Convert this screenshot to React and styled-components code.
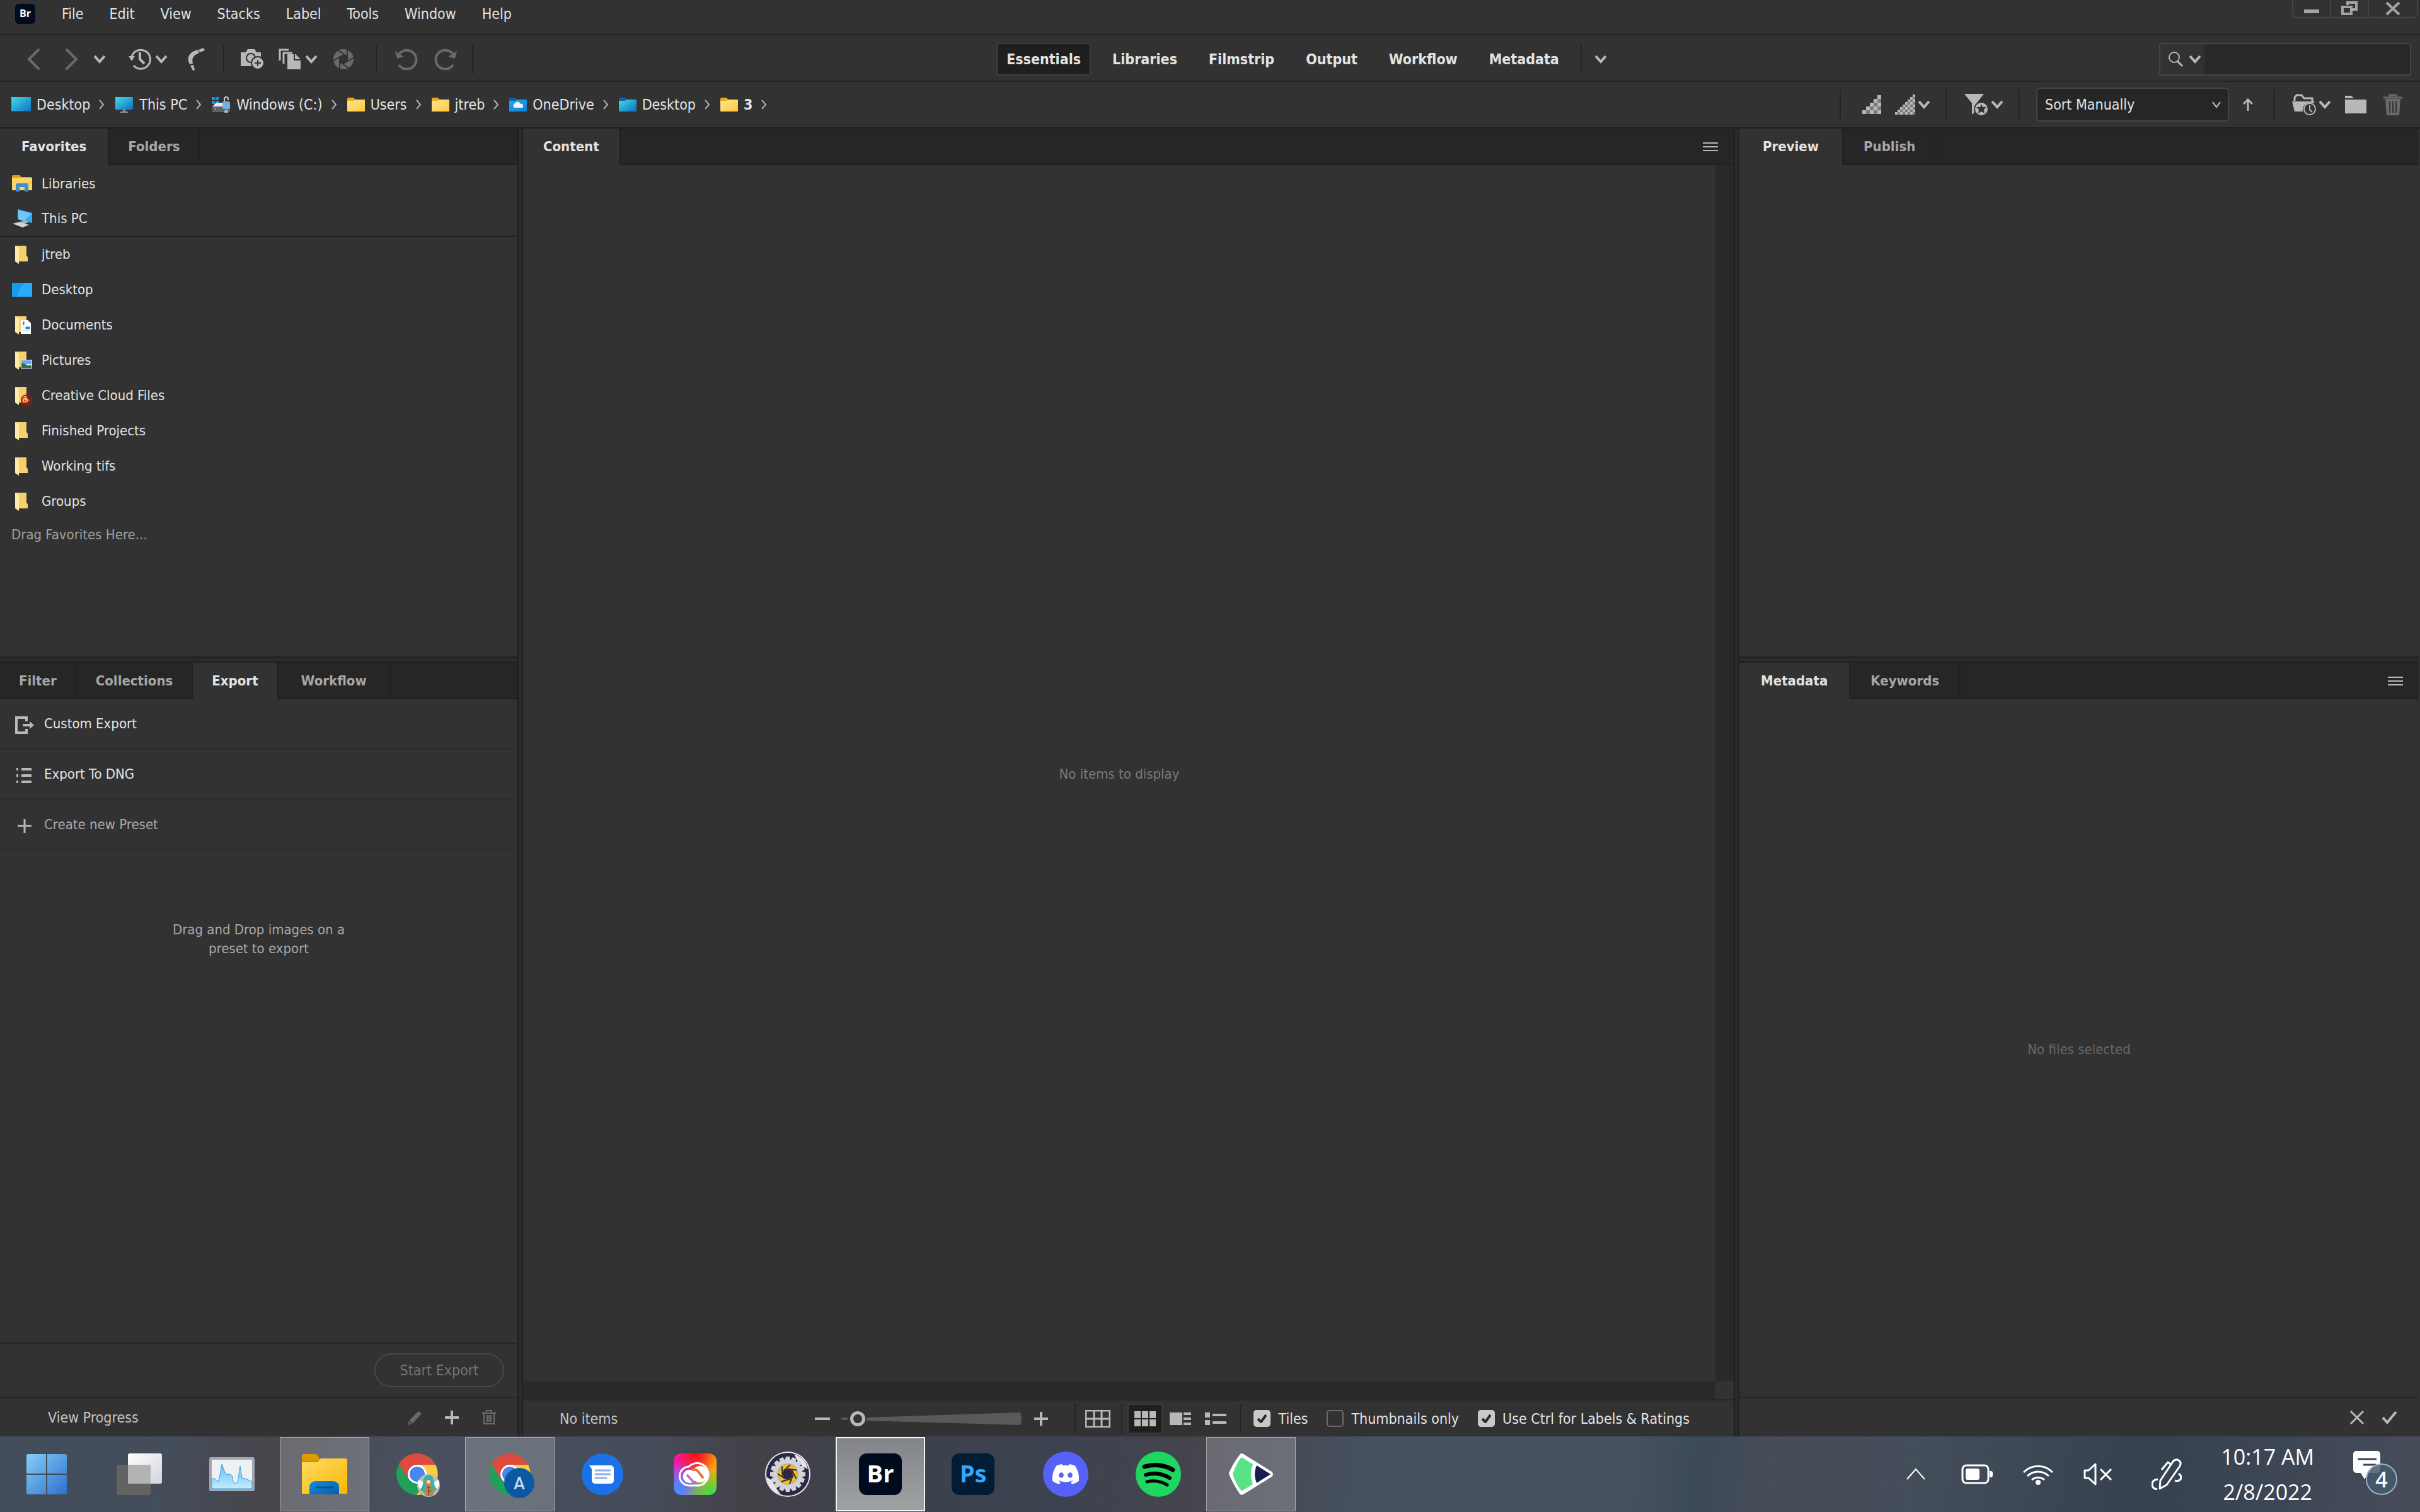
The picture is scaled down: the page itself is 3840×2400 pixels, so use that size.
import { useState } from "react";
import styled, { createGlobalStyle, css } from "styled-components";
import { FaDiscord } from "react-icons/fa";

const GlobalStyle = createGlobalStyle`
  *, *::before, *::after {
    box-sizing: border-box;
  }
  body {
    margin: 0;
    background: #323232;
    color: #e3e3e3;
    font-family: "DejaVu Sans Condensed", "DejaVu Sans", sans-serif;
    font-size: 23px;
    line-height: 30px;
  }
  button, input, select {
    font: inherit;
    color: inherit;
  }
  ul {
    list-style: none;
    margin: 0;
    padding: 0;
  }
`;

const Page = styled.div`
  display: flex;
  flex-direction: column;
  min-height: 100vh;
`;

const Bar = styled.div`
  display: flex;
  align-items: center;
  border-bottom: 2px solid #252525;
`;

const MenuBar = styled(Bar)`
  height: 56px;
  align-items: flex-start;
  padding-left: 24px;
`;

const Menus = styled.nav`
  display: flex;
  gap: 41px;
  padding: 7px 0 0 42px;
`;

const PlainButton = styled.button`
  display: inline-flex;
  align-items: center;
  background: none;
  border: none;
  padding: 0;
  cursor: pointer;
`;

const AppBadge = styled.div`
  width: 32px;
  height: 32px;
  margin-top: 6px;
  border-radius: 6px;
  background: #000b1d;
  color: #fff;
  font-family: "Open Sans", sans-serif;
  font-size: 16px;
  font-weight: 700;
  line-height: 30px;
  text-align: center;
`;

const WindowControls = styled.div`
  display: flex;
  margin: 0 3px 0 auto;
  height: 29px;
  border: 2px solid #454545;
  border-top: none;
  border-radius: 0 0 8px 8px;
`;

const WindowButton = styled(PlainButton)`
  width: ${(p) => p.$width || 60}px;
  justify-content: center;
  color: #a3a3a3;
  & + & {
    border-left: 2px solid #454545;
  }
`;

const Toolbar = styled(Bar)`
  height: 74px;
  padding-top: 4px;
`;

const ToolGroup = styled.div`
  display: flex;
  align-items: center;
  height: 48px;
  padding: 0 ${(p) => p.$right || 0}px 0 ${(p) => p.$left || 0}px;
  border-right: ${(p) => (p.$last ? "none" : "2px solid #252525")};
`;

const Tool = styled(PlainButton)`
  margin-left: ${(p) => p.$gap || 0}px;
  color: ${(p) => (p.$dim ? "#6a6a6a" : "#b8b8b8")};
`;

const Workspaces = styled.div`
  display: flex;
  align-items: center;
  margin: 0 auto;
  padding-right: 46px;
`;

const WorkspaceButton = styled(PlainButton)`
  height: 52px;
  padding: 0 14px;
  margin-right: 18px;
  border: 2px solid transparent;
  border-radius: 4px;
  font-weight: 700;
  ${(p) =>
    p.$active &&
    css`
      background: #1f1f1f;
      border-color: #3d3d3d;
    `}
`;

const SearchBox = styled.label`
  display: flex;
  width: 400px;
  height: 52px;
  margin-right: 14px;
  border: 2px solid #464646;
  border-radius: 4px;
`;

const SearchIcons = styled.span`
  display: flex;
  align-items: center;
  gap: 8px;
  width: 70px;
  padding-left: 12px;
  color: #b8b8b8;
`;

const SearchInput = styled.input`
  flex: 1;
  min-width: 0;
  border: none;
  background: #292929;
  outline: none;
`;

const PathBar = styled(Bar)`
  height: 74px;
  border-color: #1f1f1f;
  padding-left: 18px;
`;

const Crumbs = styled.ul`
  display: flex;
  flex: 1;
`;

const Crumb = styled.li`
  display: flex;
  align-items: center;
  gap: 14px;
  margin-right: 16px;
`;

const CrumbLink = styled.a`
  display: flex;
  align-items: center;
  gap: 9px;
  color: inherit;
  text-decoration: none;
  font-weight: ${(p) => (p.$current ? 700 : 400)};
`;

const SelectWrap = styled.div`
  position: relative;
  width: 306px;
  margin-left: 26px;
  svg {
    position: absolute;
    right: 12px;
    top: 21px;
    pointer-events: none;
  }
`;

const SortSelect = styled.select`
  appearance: none;
  width: 100%;
  height: 54px;
  padding: 0 40px 0 12px;
  background: #262626;
  border: 2px solid #444;
  border-radius: 6px;
`;

const Workspace = styled.main`
  flex: 1;
  display: grid;
  grid-template-columns: 821px 9px minmax(0, 1fr) 9px 1078px;
  padding-right: 2px;
`;

const Column = styled.div`
  display: flex;
  flex-direction: column;
  min-width: 0;
`;

const ColumnSplitter = styled.div`
  background: #2b2b2b;
  border: solid #1f1f1f;
  border-width: 0 2px;
`;

const RowSplitter = styled.div`
  height: 10px;
  background: #2b2b2b;
  border: solid #1f1f1f;
  border-width: 2px 0;
`;

const Panel = styled.section`
  display: flex;
  flex-direction: column;
  flex: ${(p) => (p.$upper ? "0 0 838px" : "1")};
  min-height: 0;
  font-size: 22px;
`;

const Tabs = styled.div`
  display: flex;
  height: 58px;
  background: #262626;
`;

const Tab = styled(PlainButton)`
  padding: 2px ${(p) => p.$pad || 33}px 0;
  border: solid #202020;
  border-width: 0 2px 2px 0;
  font-weight: 700;
  color: ${(p) => (p.$active ? "#e3e3e3" : "#a6a6a6")};
  ${(p) =>
    p.$active &&
    css`
      background: #323232;
      border-bottom-color: #323232;
    `}
`;

const TabsRest = styled.div`
  display: flex;
  align-items: center;
  justify-content: flex-end;
  flex: 1;
  padding: 2px 25px 0 0;
  border-bottom: 2px solid #202020;
  color: #b8b8b8;
`;

const Favorites = styled.ul`
  padding-top: 2px;
`;

const FavoriteRow = styled.li`
  display: flex;
  align-items: center;
  gap: 14px;
  height: 56px;
  padding-left: 18px;
  border-bottom: ${(p) => (p.$divided ? "2px solid #1f1f1f" : "none")};
`;

const Hint = styled.p`
  margin: 0;
  padding: 10px 18px;
  color: #a0a0a0;
`;

const PresetRow = styled.li`
  height: 80px;
  padding-left: 24px;
  display: flex;
  align-items: center;
  border-bottom: 2px solid #2c2c2c;
  color: ${(p) => (p.$muted ? "#a8a8a8" : "#e3e3e3")};
  svg {
    margin: 4px 16px 0 0;
    color: #b8b8b8;
  }
`;

const DropHint = styled.p`
  margin: 111px auto 0;
  width: 300px;
  text-align: center;
  color: #a8a8a8;
`;

const ExportFooter = styled.div`
  display: flex;
  justify-content: flex-end;
  margin-top: auto;
  padding: 15px 21px;
  height: 86px;
  border-top: 2px solid #252525;
`;

const StartExport = styled.button`
  height: 54px;
  width: 206px;
  background: none;
  border: 2px solid #484848;
  border-radius: 27px;
  font-size: 23px;
  color: #727272;
`;

const StatusBar = styled.div`
  display: flex;
  align-items: center;
  height: ${(p) => p.$height || 63}px;
  border-top: 2px solid #252525;
  padding: 0 ${(p) => p.$right || 34}px 0 ${(p) => p.$left || 0}px;
  font-size: 23px;
`;

const Muted = styled.span`
  margin-right: auto;
  color: #c4c4c4;
`;

const ContentArea = styled.div`
  flex: 1;
  display: grid;
  grid-template: minmax(0, 1fr) 29px / minmax(0, 1fr) 29px;
`;

const Empty = styled.div`
  flex: 1;
  display: flex;
  align-items: center;
  justify-content: center;
  padding-top: 4px;
  color: ${(p) => p.$color || "#7a7a7a"};
`;

const ScrollTrack = styled.div`
  background: #292929;
`;

const SliderWrap = styled.div`
  position: relative;
  width: 287px;
  height: 26px;
  margin: 0 18px;
  svg {
    position: absolute;
    inset: 0;
  }
`;

const Slider = styled.input`
  position: relative;
  appearance: none;
  display: block;
  width: 100%;
  height: 26px;
  margin: 0;
  background: none;
  &::-webkit-slider-thumb {
    appearance: none;
    width: 24px;
    height: 24px;
    border: 5px solid #b8b8b8;
    border-radius: 50%;
    background: #323232;
  }
`;

const ViewButton = styled(PlainButton)`
  justify-content: center;
  width: 56px;
  height: 48px;
  color: #b8b8b8;
  border-radius: 4px;
  ${(p) =>
    p.$active &&
    css`
      background: #1f1f1f;
      border: 2px solid #3b3b3b;
    `}
`;

const Check = styled.label`
  display: flex;
  align-items: center;
  gap: 12px;
  margin-left: ${(p) => p.$gap || 30}px;
`;

const CheckMark = styled.span`
  position: relative;
  width: 27px;
  height: 27px;
  svg {
    position: absolute;
    left: 5px;
    top: 6px;
    pointer-events: none;
  }
`;

const CheckInput = styled.input`
  appearance: none;
  display: block;
  width: 27px;
  height: 27px;
  margin: 0;
  border: 2px solid #6c6c6c;
  border-radius: 5px;
  &:checked {
    background: #c9c9c9;
    border-color: #c9c9c9;
  }
`;

const Taskbar = styled.footer`
  display: flex;
  justify-content: space-between;
  height: 120px;
  padding-left: 3px;
  background: linear-gradient(
    97deg,
    #424d5b 0%,
    #444d5a 7%,
    #47454b 11%,
    #49515e 17%,
    #454c59 27%,
    #434148 31%,
    #3b414d 38%,
    #3c4350 44%,
    #45444c 49%,
    #465260 57%,
    #465260 67%,
    #3c4957 70%,
    #464c58 73%,
    #444d5a 79%,
    #364250 88%,
    #3b4553 93%,
    #474c59 100%
  );
`;

const Tasks = styled.div`
  display: flex;
  gap: 5px;
  padding: 1px 0;
`;

const Task = styled(PlainButton)`
  justify-content: center;
  width: 142px;
  height: 118px;
  border: 1px solid transparent;
  ${(p) =>
    p.$open &&
    css`
      background: rgba(255, 255, 255, 0.2);
      border-color: rgba(255, 255, 255, 0.4);
    `}
  ${(p) =>
    p.$focused &&
    css`
      background: linear-gradient(#83848a, #a0a1a4);
      border: 2px solid #f4f4f4;
    `}
`;

const AdobeTile = styled.span`
  width: 68px;
  height: 66px;
  border-radius: 12px;
  background: ${(p) => p.$bg};
  color: ${(p) => p.$color};
  font-family: "Open Sans", sans-serif;
  font-size: 38px;
  font-weight: 700;
  line-height: 62px;
  text-align: center;
`;

const DiscordDisc = styled.span`
  display: flex;
  align-items: center;
  justify-content: center;
  width: 72px;
  height: 72px;
  border-radius: 50%;
  background: #5562f5;
  color: #fff;
`;

const Tray = styled.div`
  display: flex;
  align-items: center;
  gap: 62px;
  padding-right: 34px;
  color: #fff;
`;

const TrayStatus = styled.div`
  display: flex;
  align-items: center;
  gap: 48px;
`;

const Clock = styled.div`
  font-family: "Open Sans", sans-serif;
  font-size: 34px;
  line-height: 56px;
  text-align: center;
`;

const Notifications = styled(PlainButton)`
  position: relative;
  width: 72px;
  height: 74px;
  align-items: flex-start;
  color: #fff;
`;

const NotificationCount = styled.span`
  position: absolute;
  left: 20px;
  top: 20px;
  width: 50px;
  height: 50px;
  border: 2px solid #a3b1bd;
  border-radius: 50%;
  background: rgba(67, 91, 110, 0.85);
  font-family: "Open Sans", sans-serif;
  font-size: 34px;
  font-weight: 600;
  line-height: 46px;
  text-align: center;
`;

const Svg = ({ w, h, children, ...rest }) => (
  <svg
    width={w}
    height={h}
    viewBox={`0 0 ${w} ${h}`}
    fill="none"
    aria-hidden="true"
    {...rest}
  >
    {children}
  </svg>
);

const Caret = ({ size = 20 }) => (
  <Svg w={size} h={14} viewBox="0 0 20 14">
    <path d="M2 2l8 9 8-9" stroke="currentColor" strokeWidth="4" />
  </Svg>
);

const BackIcon = () => (
  <Svg w={21} h={34}>
    <path d="M18 2L3 17l15 15" stroke="currentColor" strokeWidth="4" strokeLinecap="round" />
  </Svg>
);

const ForwardIcon = () => (
  <Svg w={21} h={34}>
    <path d="M3 2l15 15L3 32" stroke="currentColor" strokeWidth="4" strokeLinecap="round" />
  </Svg>
);

const HistoryIcon = () => (
  <Svg w={36} h={34}>
    <path d="M5 13A15 15 0 1 1 8 27" stroke="currentColor" strokeWidth="3" />
    <path d="M0 12h10l-5 8z" fill="currentColor" />
    <path d="M18 6v11l7 7" stroke="currentColor" strokeWidth="4" />
  </Svg>
);

const BoomerangIcon = () => (
  <Svg w={28} h={36}>
    <path
      d="M26 0l2 4-8 3-2-4zM17 3l2 5C9 12 7 17 9 25l-5 1C-2 15 4 6 17 3zM5 28l5-1 2 8-3 1z"
      fill="currentColor"
    />
  </Svg>
);

const CameraIcon = () => (
  <Svg w={38} h={34}>
    <path d="M0 6h8l3-5h11l3 5h7v7a11 11 0 0 0-12 15H0z" fill="currentColor" />
    <circle cx="16" cy="15" r="7" stroke="#323232" strokeWidth="2" />
    <circle cx="27" cy="23" r="11" fill="#323232" />
    <circle cx="27" cy="23" r="9" fill="currentColor" />
    <path d="M27 18v10M22 23h10" stroke="#323232" strokeWidth="2" />
  </Svg>
);

const PagesIcon = () => (
  <Svg w={36} h={34}>
    <path d="M2 19V2h14M8 24V7h14" stroke="currentColor" strokeWidth="3" />
    <path d="M14 9h10v10h11v14H14z" fill="currentColor" />
    <path d="M26 8l9 9h-9z" fill="currentColor" />
  </Svg>
);

const ApertureIcon = () => (
  <Svg w={34} h={34}>
    <circle cx="17" cy="17" r="16" fill="currentColor" />
    <path d="M17 10l6 3v8l-6 3-6-3v-8z" fill="#323232" />
    <path
      d="M23 13L9 3M23 21V1M17 24l17-10M11 21l14 10M11 13v20M17 10L0 20"
      stroke="#323232"
      strokeWidth="2"
    />
    <path d="M17 11l5 3v6l-5 3-5-3v-6z" fill="#323232" />
  </Svg>
);

const UndoIcon = ({ flip }) => (
  <Svg w={36} h={34}>
    <g transform={flip ? "matrix(-1 0 0 1 36 0)" : undefined}>
      <path d="M7 8a15 15 0 1 1-1 18" stroke="currentColor" strokeWidth="4" />
      <path d="M0 4l3 12 11-3z" fill="currentColor" />
    </g>
  </Svg>
);

const SearchIcon = () => (
  <Svg w={25} h={25}>
    <circle cx="10" cy="9" r="8" stroke="currentColor" strokeWidth="2" />
    <path d="M15 15l8 8" stroke="currentColor" strokeWidth="3" />
  </Svg>
);

const ThinChevron = () => (
  <Svg w={9} h={16}>
    <path d="M1 1l6 7-6 7" stroke="#b0b0b0" strokeWidth="2" />
  </Svg>
);

const Stairs = ({ size, step }) => {
  const cells = [];
  const n = Math.floor(size / step);
  for (let col = 0; col < n; col++) {
    for (let row = n - 1 - col; row < n; row++) {
      cells.push(
        <rect
          key={`${col}-${row}`}
          x={col * step}
          y={row * step}
          width={step}
          height={step}
          fill="currentColor"
          opacity={(col + row + n) % 2 ? 1 : 0.55}
        />,
      );
    }
  }
  return (
    <Svg w={size} h={size}>
      {cells}
    </Svg>
  );
};

const FilterIcon = () => (
  <Svg w={38} h={36}>
    <path d="M0 1h31L20 15a13 13 0 0 0-4 15l-4 4V16z" fill="currentColor" />
    <circle cx="27" cy="25" r="10" fill="currentColor" />
    <path d="M27 17l2 5h6l-4 4 1 6-5-3-5 3 1-6-4-4h6z" fill="#323232" />
  </Svg>
);

const ArrowUp = () => (
  <Svg w={16} h={20}>
    <path d="M8 20V3M1 9l7-7 7 7" stroke="currentColor" strokeWidth="3" />
  </Svg>
);

const RecentFolderIcon = () => (
  <Svg w={38} h={34}>
    <path d="M4 11V6l3-4h8l4 5h13v5" stroke="currentColor" strokeWidth="3" />
    <path d="M0 12h36l-2 3a12 12 0 0 0-17 13H4z" fill="currentColor" />
    <circle cx="28" cy="24" r="9" fill="#323232" stroke="currentColor" strokeWidth="2" />
    <path d="M28 18v7l4 4" stroke="currentColor" strokeWidth="2" />
  </Svg>
);

const NewFolderIcon = () => (
  <Svg w={34} h={30}>
    <path d="M0 1h10l4 4H0zM0 7h34v22H0z" fill="currentColor" />
  </Svg>
);

const TrashIcon = () => (
  <Svg w={30} h={34}>
    <path d="M0 6h30M10 5V2h10v3" stroke="currentColor" strokeWidth="3" />
    <path d="M3 8h24l-2 26H5z" fill="currentColor" />
    <path d="M10 12v18M15 12v18M20 12v18" stroke="#323232" strokeWidth="2" />
  </Svg>
);

const TrashOutlineIcon = () => (
  <Svg w={22} h={24}>
    <path d="M0 5h22M7 4V1h8v3M3 5v17h16V5M8 8v11M11 8v11M14 8v11" stroke="currentColor" strokeWidth="2" />
  </Svg>
);

const BurgerIcon = () => (
  <Svg w={24} h={16}>
    <path d="M0 2h24M0 8h24M0 14h24" stroke="currentColor" strokeWidth="2" />
  </Svg>
);

const DesktopIcon = () => (
  <Svg w={31} h={24}>
    <rect width="31" height="24" fill="url(#teal)" />
    <path d="M0 23h31" stroke="#0a4f96" strokeWidth="2" />
  </Svg>
);

const MonitorIcon = () => (
  <Svg w={30} h={26}>
    <rect x="1" y="1" width="28" height="20" rx="1" fill="url(#teal)" />
    <path d="M13 21h4v3h4v2H9v-2h4z" fill="#8d9299" />
  </Svg>
);

const DriveIcon = () => (
  <Svg w={30} h={26}>
    <path d="M0 1h5v5H0zM6 1h5v5H6zM0 7h5v5H0zM6 7h5v5H6z" fill="#1c8fdc" />
    <path d="M3 14l4-4h16l6 6H1z" fill="#e8eaec" />
    <path d="M1 16h28v9H1z" fill="#5d6166" />
    <rect x="5" y="19" width="2" height="2" fill="#4be34b" />
    <path d="M20 8V4a3 3 0 0 1 6 0v2" stroke="#c7ccd1" strokeWidth="2" />
    <rect x="17" y="8" width="12" height="12" rx="2" fill="#6fb1e2" />
    <circle cx="23" cy="24" r="3" fill="#a9b4bd" />
  </Svg>
);

const FolderIcon = ({ kind }) => (
  <Svg w={28} h={22}>
    <path d="M0 2a2 2 0 0 1 2-2h8l3 4h15v6H0z" fill={kind ? "#0a62b5" : "#efab17"} />
    <path d="M0 5h10l2-2h16v18a1 1 0 0 1-1 1H1a1 1 0 0 1-1-1z" fill={`url(#${kind || "folder"})`} />
    {kind === "sky" && (
      <path d="M8 16a4 4 0 0 1 1-7 5 5 0 0 1 9 1 3 3 0 0 1 2 6z" fill="#fff" opacity="0.9" />
    )}
  </Svg>
);

const LibrariesIcon = () => (
  <Svg w={34} h={28}>
    <path d="M1 2a2 2 0 0 1 2-2h10l3 3h16v20H1z" fill="#dd9c0c" />
    <rect x="1" y="4" width="32" height="20" rx="1" fill="#fdd566" />
    <path d="M7 26V15a2 2 0 0 1 2-2h16a2 2 0 0 1 2 2v11h-6v-7h-8v7z" fill="#3d8fd1" />
  </Svg>
);

const OldPcIcon = () => (
  <Svg w={34} h={32}>
    <path d="M10 1l23 6v16L10 17z" fill="#37abef" />
    <path d="M11 2l21 6L20 20l-9-3z" fill="#6cc8f8" />
    <path d="M2 24l12-3 14 5-10 4z" fill="#cfd4d8" />
    <path d="M14 21l8-2 6 2-6 3z" fill="#aab1b8" />
  </Svg>
);

const SlimFolder = ({ children }) => (
  <Svg w={34} h={30}>
    <path d="M6 1h18v16l2 2v7H10z" fill="#f4d06f" />
    <path d="M6 1l6 3v26l-6-4z" fill="#ffe9a6" />
    {children}
  </Svg>
);

const BlueDesktop = () => (
  <Svg w={34} h={24}>
    <rect x="1" y="1" width="32" height="22" fill="#169bf3" />
    <path d="M22 1h11v22H10q1-15 12-22z" fill="#2ba9fb" />
  </Svg>
);

const DocumentsIcon = () => (
  <SlimFolder>
    <path d="M15 7h11l5 5v17H15z" fill="#fff" />
    <path d="M18 14l2-5v6M23 18h6v3h-6z" stroke="#2585c9" fill="#2585c9" />
    <path d="M18 24h10M18 18h3" stroke="#b8c5d0" />
  </SlimFolder>
);

const PicturesIcon = () => (
  <SlimFolder>
    <rect x="15" y="14" width="18" height="14" fill="#dceaf8" />
    <path d="M16 15h16v6H16z" fill="#6ba7e8" />
    <path d="M16 19q6 1 9 4h7v4H16z" fill="#2f6d50" />
  </SlimFolder>
);

const CloudFilesIcon = () => (
  <SlimFolder>
    <circle cx="24" cy="22" r="8" stroke="#b3160c" strokeWidth="2" />
    <path d="M19 25a4 4 0 0 1 6-6l4 5M21 25v-3l5 4" stroke="#ff4a22" strokeWidth="2" />
  </SlimFolder>
);

const CustomExportIcon = () => (
  <Svg w={30} h={28}>
    <path d="M18 8V2H2v24h16v-6" stroke="currentColor" strokeWidth="4" />
    <path d="M12 12h11V8l7 6-7 6v-4H12z" fill="currentColor" />
  </Svg>
);

const ListIcon = () => (
  <Svg w={30} h={24}>
    <path d="M2 2h3M10 2h16M2 12h3M10 12h16M2 22h3M10 22h16" stroke="currentColor" strokeWidth="4" />
  </Svg>
);

const PlusIcon = ({ w = 24, thickness = 4 }) => (
  <Svg w={w} h={24}>
    <path
      d={`M${w / 2} 1v22M${w / 2 - 11} 12h22`}
      stroke="currentColor"
      strokeWidth={thickness}
    />
  </Svg>
);

const PencilIcon = () => (
  <Svg w={24} h={24}>
    <path d="M17 2l5 4L8 21l-8 3 3-8z" fill="currentColor" />
    <path d="M4 18l3 2-4 2z" fill="#323232" />
  </Svg>
);

const WindowsLogo = () => (
  <Svg w={64} h={64}>
    <path
      d="M3 0h28v31H0V3a3 3 0 0 1 3-3zM33 0h28a3 3 0 0 1 3 3v28H33zM0 33h31v31H3a3 3 0 0 1-3-3zM33 33h31v28a3 3 0 0 1-3 3H33z"
      fill="url(#win)"
    />
  </Svg>
);

const TaskViewIcon = () => (
  <Svg w={72} h={66}>
    <rect y="18" width="54" height="48" rx="3" fill="#636363" />
    <rect x="18" width="54" height="48" rx="3" fill="url(#paper)" />
    <path d="M18 18h36v30H21a3 3 0 0 1-3-3z" fill="#b3b3b5" />
  </Svg>
);

const ChartIcon = () => (
  <Svg w={72} h={54}>
    <rect width="72" height="54" rx="3" fill="#a1a8b3" />
    <rect x="4" y="4" width="64" height="46" fill="#eef0f2" />
    <path
      d="M4 34h5l5 5 2-6 4-22 6 16h7l4 4 1 8 3 3 4-2 4-26 3 19 8 2 8 4v11H4z"
      fill="url(#chart)"
      stroke="#3fa0dc"
    />
  </Svg>
);

const ExplorerIcon = () => (
  <Svg w={72} h={64}>
    <path d="M0 3a3 3 0 0 1 3-3h18c3 0 5 2 6 6l3 5H0z" fill="#dd9b00" />
    <path d="M0 12h26l4-5h39a3 3 0 0 1 3 3v53H0z" fill="url(#explorer)" />
    <path d="M12 64V52a9 9 0 0 1 9-9h29a9 9 0 0 1 9 9v12z" fill="url(#explorerBlue)" />
    <path d="M23 53h26" stroke="#0b4e8f" strokeWidth="3" strokeLinecap="round" />
  </Svg>
);

const Chrome = ({ children }) => (
  <Svg w={66} h={74} overflow="visible">
    <circle cx="33" cy="37" r="33" fill="#21a05a" />
    <path d="M33 37l16 9-17 24a33 33 0 0 0 30-48H33z" fill="#fccb44" />
    <path d="M4 21a33 33 0 0 1 58 1H33L19 45z" fill="#dc4b3e" />
    <circle cx="33" cy="37" r="15" fill="#fff" />
    <circle cx="33" cy="37" r="12" fill="#4a86ef" />
    {children}
  </Svg>
);

const ChromeAvatar = () => (
  <Chrome>
    <circle cx="51" cy="55" r="18" fill="#bfbcae" />
    <path d="M34 47q8-2 10 10l-4 6q-7-6-6-16zM68 47q-8-2-10 10l4 6q7-6 6-16z" fill="#fff" />
    <path d="M51 38q-8 1-8 10-1 9-6 14 7 2 9 9l2-17h7l2 16q3-7 8-9-5-4-6-13 0-9-8-10z" fill="#35b2ab" />
    <path d="M47 47q4-4 8 0l1 7q5 10 1 18H46q-4-8 1-18z" fill="#b48a50" />
    <path d="M48 57q4 4 7 0M48 63q4 3 8 0M51 54v18" stroke="#5d3a22" />
    <circle cx="51" cy="49" r="3" fill="#f7d9b5" />
  </Chrome>
);

const ChromeLetter = () => (
  <Chrome>
    <circle cx="48" cy="51" r="24" fill="#0a59a2" />
    <text
      x="48"
      y="61"
      textAnchor="middle"
      fill="#c9dcef"
      fontFamily="Roboto, sans-serif"
      fontSize="27"
      fontWeight="500"
    >
      A
    </text>
  </Chrome>
);

const MessagesIcon = () => (
  <Svg w={66} h={66}>
    <circle cx="33" cy="33" r="33" fill="#1b72e8" />
    <path d="M12 19h34a5 5 0 0 1 5 5v19a5 5 0 0 1-5 5H21a5 5 0 0 1-5-5V25z" fill="#fff" />
    <path d="M22 27h23M22 33h23M22 39h17" stroke="#8ab0f2" strokeWidth="3" strokeLinecap="round" />
  </Svg>
);

const CreativeCloudShell = styled.span`
  display: flex;
  width: 68px;
  height: 66px;
  border-radius: 12px;
  background:
    radial-gradient(circle at 50% 0%, #ff0a0a 0%, rgba(255, 10, 10, 0) 50%),
    radial-gradient(circle at 88% 96%, #2fe052 0%, rgba(47, 224, 82, 0) 45%),
    radial-gradient(circle at 12% 86%, #3f8cff 0%, rgba(63, 140, 255, 0) 55%),
    radial-gradient(circle at 0% 20%, #fb0fb8 0%, rgba(251, 15, 184, 0) 65%),
    linear-gradient(100deg, #e052c4 20%, #f08c28 60%, #ffb400 100%);
`;

const CreativeCloudIcon = () => (
  <CreativeCloudShell>
    <Svg w={68} h={66}>
      <path
        d="M25 51a15 15 0 0 1-1-30 18 18 0 1 1 17 30z"
        stroke="#fff"
        strokeWidth="3"
      />
      <path
        d="M25 26q5 0 9 4l13 14q-2 2-6 2-4 0-8-3l-2 3q-3 1-6 1a10 10 0 0 1 0-21z"
        fill="#fff"
      />
      <circle cx="42" cy="33" r="13" fill="#fff" />
      <path d="M22 35l10 11" stroke="#d06ad8" strokeWidth="4" strokeLinecap="round" />
      <path d="M31 26q5-1 8 3l7 9" stroke="#f0703c" strokeWidth="4" strokeLinecap="round" />
    </Svg>
  </CreativeCloudShell>
);

const GearIcon = () => (
  <Svg w={72} h={72}>
    <circle cx="36" cy="36" r="36" fill="#e6e7ea" />
    <circle cx="36" cy="36" r="34" fill="#2b2748" />
    <path d="M46 4q18 6 22 24l-9-5-8-9zM2 40l9 6 8 14 6 8Q6 62 2 40z" fill="#e6e7ea" />
    {Array.from({ length: 16 }, (_, i) => (
      <path
        key={i}
        d="M33 8h6l2 8h-10z"
        fill="#d2d3d7"
        transform={`rotate(${i * 22.5} 36 36)`}
      />
    ))}
    <circle cx="36" cy="36" r="22" fill="#d2d3d7" />
    <circle cx="36" cy="36" r="17" fill="#b9b195" />
    <circle cx="36" cy="36" r="15" fill="#f8bf10" />
    {Array.from({ length: 7 }, (_, i) => (
      <path
        key={i}
        d="M29 31l11-10"
        stroke="#2b2748"
        strokeWidth="2"
        transform={`rotate(${i * 51.4} 36 36)`}
      />
    ))}
    <circle cx="36" cy="36" r="8" fill="#2b2748" />
  </Svg>
);

const SpotifyIcon = () => (
  <Svg w={72} h={72}>
    <circle cx="36" cy="36" r="36" fill="#1ed760" />
    <path d="M14 24q24-7 45 5" stroke="#000" strokeWidth="7" strokeLinecap="round" />
    <path d="M16 37q20-6 38 5" stroke="#000" strokeWidth="6" strokeLinecap="round" />
    <path d="M18 48q17-4 32 5" stroke="#000" strokeWidth="5" strokeLinecap="round" />
  </Svg>
);

const ArrowAppIcon = () => (
  <Svg w={72} h={68}>
    <path
      d="M19 2q2-2 5 0l45 28q4 4 0 8L24 66q-4 2-6-1Q8 50 2 36q-2-3 0-6Q8 16 19 2z"
      fill="#fff"
    />
    <path d="M21 7l18 11q-6 15 0 32L21 61Q11 48 7 34q4-14 14-27z" fill="#59e287" />
    <path d="M45 20l22 14-22 14q-6-14 0-28z" fill="#15204d" />
  </Svg>
);

const TrayChevron = () => (
  <Svg w={39} h={20}>
    <path d="M1 18L15 2l14 16" stroke="currentColor" strokeWidth="2" />
  </Svg>
);

const BatteryIcon = () => (
  <Svg w={50} h={32}>
    <rect x="2" y="2" width="41" height="28" rx="6" stroke="currentColor" strokeWidth="3" />
    <rect x="7" y="7" width="22" height="18" rx="3" fill="currentColor" />
    <path d="M45 11h2a3 3 0 0 1 3 3v4a3 3 0 0 1-3 3h-2z" fill="currentColor" />
  </Svg>
);

const WifiIcon = () => (
  <Svg w={48} h={36}>
    <path
      d="M1 15a32 32 0 0 1 46 0M7 21a24 24 0 0 1 34 0M14 27a15 15 0 0 1 20 0"
      stroke="currentColor"
      strokeWidth="3"
    />
    <circle cx="24" cy="31" r="4" fill="currentColor" />
  </Svg>
);

const MuteIcon = () => (
  <Svg w={46} h={36}>
    <path d="M2 12h6L19 2v32L8 24H2z" stroke="currentColor" strokeWidth="3" strokeLinejoin="round" />
    <path d="M27 10l17 17M44 10L27 27" stroke="currentColor" strokeWidth="3" />
  </Svg>
);

const PenIcon = () => (
  <Svg w={48} h={50}>
    <path
      d="M14 35L34 5q4-5 9-2t2 9L24 42l-11 6z M16 18L26 6l4 3M10 33q-9 1-9 8t8 8M43 24q6 4 3 9-3 4-9 2"
      stroke="currentColor"
      strokeWidth="3"
      strokeLinejoin="round"
    />
  </Svg>
);

const ChatIcon = () => (
  <Svg w={44} h={46}>
    <path d="M5 0h33a5 5 0 0 1 5 5v25a5 5 0 0 1-5 5H24L18 45l-6-10H5a5 5 0 0 1-5-5V5a5 5 0 0 1 5-5z" fill="currentColor" />
    <path d="M7 13h30M16 22h20" stroke="#3a4755" strokeWidth="3" />
  </Svg>
);

// Gradients shared by the folder and taskbar icons.
const GradientDefs = styled.svg`
  position: absolute;
`;

const Gradients = () => (
  <GradientDefs width="0" height="0" aria-hidden="true">
    <defs>
      <linearGradient id="teal" x1="0" y1="0" x2="1" y2="1">
        <stop offset="0" stopColor="#3fdfe6" />
        <stop offset="1" stopColor="#0f6cc0" />
      </linearGradient>
      <linearGradient id="sky" x1="0" y1="0" x2="1" y2="1">
        <stop offset="0" stopColor="#28a9ea" />
        <stop offset="1" stopColor="#0a7fd6" />
      </linearGradient>
      <linearGradient id="folder" x1="0" y1="0" x2="1" y2="1">
        <stop offset="0" stopColor="#ffe69a" />
        <stop offset="1" stopColor="#fdc937" />
      </linearGradient>
      <linearGradient id="win" x1="0" y1="0" x2="1" y2="1">
        <stop offset="0" stopColor="#86cef8" />
        <stop offset="1" stopColor="#2c71cc" />
      </linearGradient>
      <linearGradient id="paper" x1="0" y1="0" x2="1" y2="1">
        <stop offset="0" stopColor="#ffffff" />
        <stop offset="1" stopColor="#d3d5dc" />
      </linearGradient>
      <linearGradient id="chart" x1="0" y1="0" x2="0" y2="1">
        <stop offset="0" stopColor="#5cc0f5" />
        <stop offset="1" stopColor="#c5ecff" />
      </linearGradient>
      <linearGradient id="explorer" x1="0" y1="0" x2="1" y2="1">
        <stop offset="0" stopColor="#ffdb66" />
        <stop offset="1" stopColor="#fbb604" />
      </linearGradient>
      <linearGradient id="explorerBlue" x1="0" y1="0" x2="1" y2="1">
        <stop offset="0" stopColor="#0d8edd" />
        <stop offset="1" stopColor="#0a5cae" />
      </linearGradient>
    </defs>
  </GradientDefs>
);

const menus = ["File", "Edit", "View", "Stacks", "Label", "Tools", "Window", "Help"];

const workspaces = ["Essentials", "Libraries", "Filmstrip", "Output", "Workflow", "Metadata"];

const path = [
  { label: "Desktop", icon: <DesktopIcon /> },
  { label: "This PC", icon: <MonitorIcon /> },
  { label: "Windows (C:)", icon: <DriveIcon /> },
  { label: "Users", icon: <FolderIcon /> },
  { label: "jtreb", icon: <FolderIcon /> },
  { label: "OneDrive", icon: <FolderIcon kind="sky" /> },
  { label: "Desktop", icon: <FolderIcon kind="teal" /> },
  { label: "3", icon: <FolderIcon />, current: true },
];

const favorites = [
  { label: "Libraries", icon: <LibrariesIcon /> },
  { label: "This PC", icon: <OldPcIcon />, divided: true },
  { label: "jtreb", icon: <SlimFolder /> },
  { label: "Desktop", icon: <BlueDesktop /> },
  { label: "Documents", icon: <DocumentsIcon /> },
  { label: "Pictures", icon: <PicturesIcon /> },
  { label: "Creative Cloud Files", icon: <CloudFilesIcon /> },
  { label: "Finished Projects", icon: <SlimFolder /> },
  { label: "Working tifs", icon: <SlimFolder /> },
  { label: "Groups", icon: <SlimFolder /> },
];

const tasks = [
  { name: "Start", icon: <WindowsLogo /> },
  { name: "Task view", icon: <TaskViewIcon /> },
  { name: "Resource monitor", icon: <ChartIcon /> },
  { name: "File Explorer", icon: <ExplorerIcon />, open: true },
  { name: "Chrome", icon: <ChromeAvatar /> },
  { name: "Chrome, second profile", icon: <ChromeLetter />, open: true },
  { name: "Messages", icon: <MessagesIcon /> },
  { name: "Creative Cloud", icon: <CreativeCloudIcon /> },
  { name: "Gear", icon: <GearIcon /> },
  {
    name: "Bridge",
    icon: <AdobeTile $bg="#000b1d" $color="#fff">Br</AdobeTile>,
    focused: true,
  },
  { name: "Photoshop", icon: <AdobeTile $bg="#001d33" $color="#31a8ff">Ps</AdobeTile> },
  {
    name: "Discord",
    icon: (
      <DiscordDisc>
        <FaDiscord size={46} />
      </DiscordDisc>
    ),
  },
  { name: "Spotify", icon: <SpotifyIcon /> },
  { name: "Arrow", icon: <ArrowAppIcon />, open: true },
];

const TabBar = ({ tabs, active, menu }) => (
  <Tabs role="tablist">
    {tabs.map(([label, pad]) => (
      <Tab
        key={label}
        role="tab"
        aria-selected={label === active}
        $active={label === active}
        $pad={pad}
      >
        {label}
      </Tab>
    ))}
    <TabsRest>
      {menu && (
        <Tool aria-label="Panel menu">
          <BurgerIcon />
        </Tool>
      )}
    </TabsRest>
  </Tabs>
);

const CheckOption = ({ label, gap, initial = false }) => {
  const [checked, setChecked] = useState(initial);
  return (
    <Check $gap={gap}>
      <CheckMark>
        <CheckInput
          type="checkbox"
          checked={checked}
          onChange={(e) => setChecked(e.target.checked)}
        />
        {checked && (
          <Svg w={17} h={15}>
            <path d="M2 8l5 5 8-11" stroke="#2a2a2a" strokeWidth="4" />
          </Svg>
        )}
      </CheckMark>
      {label}
    </Check>
  );
};

const App = () => {
  const [zoom, setZoom] = useState(5);

  return (
    <Page>
      <GlobalStyle />
      <Gradients />

      <MenuBar>
        <AppBadge>Br</AppBadge>
        <Menus>
          {menus.map((m) => (
            <PlainButton key={m}>{m}</PlainButton>
          ))}
        </Menus>
        <WindowControls>
          <WindowButton $width={58} aria-label="Minimize">
            <Svg w={26} h={20}>
              <path d="M1 14h24" stroke="currentColor" strokeWidth="6" />
            </Svg>
          </WindowButton>
          <WindowButton aria-label="Restore">
            <Svg w={26} h={24}>
              <path d="M10 6V2h14v11h-6M2 9h14v11H2z" stroke="currentColor" strokeWidth="4" />
            </Svg>
          </WindowButton>
          <WindowButton $width={78} aria-label="Close">
            <Svg w={24} h={22}>
              <path d="M2 1l20 19M22 1L2 20" stroke="currentColor" strokeWidth="4" />
            </Svg>
          </WindowButton>
        </WindowControls>
      </MenuBar>

      <Toolbar>
        <ToolGroup $left={43} $right={29}>
          <Tool $dim aria-label="Back">
            <BackIcon />
          </Tool>
          <Tool $dim $gap={39} aria-label="Forward">
            <ForwardIcon />
          </Tool>
          <Tool $gap={24} aria-label="Folders">
            <Caret />
          </Tool>
          <Tool $gap={36} aria-label="Recent">
            <HistoryIcon />
          </Tool>
          <Tool $gap={6} aria-label="Recent list">
            <Caret />
          </Tool>
          <Tool $gap={31} aria-label="Boomerang">
            <BoomerangIcon />
          </Tool>
        </ToolGroup>
        <ToolGroup $left={26} $right={34}>
          <Tool aria-label="Get photos from camera">
            <CameraIcon />
          </Tool>
          <Tool $gap={22} aria-label="Refine">
            <PagesIcon />
          </Tool>
          <Tool $gap={6} aria-label="Refine list">
            <Caret />
          </Tool>
          <Tool $dim $gap={24} aria-label="Open in Camera Raw">
            <ApertureIcon />
          </Tool>
        </ToolGroup>
        <ToolGroup $left={29} $right={24}>
          <Tool $dim aria-label="Rotate left">
            <UndoIcon />
          </Tool>
          <Tool $dim $gap={26} aria-label="Rotate right">
            <UndoIcon flip />
          </Tool>
        </ToolGroup>
        <Workspaces>
          {workspaces.map((w) => (
            <WorkspaceButton key={w} $active={w === "Essentials"}>
              {w}
            </WorkspaceButton>
          ))}
          <ToolGroup />
          <Tool $gap={20} aria-label="More workspaces">
            <Caret />
          </Tool>
        </Workspaces>
        <SearchBox>
          <SearchIcons>
            <SearchIcon />
            <Caret />
          </SearchIcons>
          <SearchInput type="text" aria-label="Search" />
        </SearchBox>
      </Toolbar>

      <PathBar>
        <Crumbs>
          {path.map((p, i) => (
            <Crumb key={i}>
              <CrumbLink href="#" $current={p.current}>
                {p.icon}
                {p.label}
              </CrumbLink>
              <ThinChevron />
            </Crumb>
          ))}
        </Crumbs>
        <ToolGroup />
        <ToolGroup $left={34} $right={24}>
          <Tool aria-label="Embedded thumbnails">
            <Stairs size={30} step={6} />
          </Tool>
          <Tool $gap={22} aria-label="Thumbnail quality">
            <Stairs size={32} step={4} />
          </Tool>
          <Tool $gap={4} aria-label="Thumbnail quality list">
            <Caret />
          </Tool>
        </ToolGroup>
        <ToolGroup $left={28} $right={24}>
          <Tool aria-label="Filter by rating">
            <FilterIcon />
          </Tool>
          <Tool $gap={4} aria-label="Filter list">
            <Caret />
          </Tool>
        </ToolGroup>
        <SelectWrap>
          <SortSelect aria-label="Sort">
            <option>Sort Manually</option>
          </SortSelect>
          <Svg w={16} h={12}>
            <path d="M2 2l6 8 6-8" stroke="#c8c8c8" strokeWidth="2" />
          </Svg>
        </SelectWrap>
        <ToolGroup $left={22} $right={32}>
          <Tool aria-label="Ascending order">
            <ArrowUp />
          </Tool>
        </ToolGroup>
        <ToolGroup $left={28} $right={28} $last>
          <Tool aria-label="Open recent file">
            <RecentFolderIcon />
          </Tool>
          <Tool $gap={4} aria-label="Recent files">
            <Caret />
          </Tool>
          <Tool $gap={22} aria-label="New folder">
            <NewFolderIcon />
          </Tool>
          <Tool $dim $gap={27} aria-label="Delete">
            <TrashIcon />
          </Tool>
        </ToolGroup>
      </PathBar>

      <Workspace>
        <Column>
          <Panel $upper>
            <TabBar tabs={[["Favorites", 34], ["Folders", 30]]} active="Favorites" />
            <Favorites>
              {favorites.map((f) => (
                <FavoriteRow key={f.label} $divided={f.divided}>
                  {f.icon}
                  {f.label}
                </FavoriteRow>
              ))}
            </Favorites>
            <Hint>Drag Favorites Here...</Hint>
          </Panel>
          <RowSplitter />
          <Panel>
            <TabBar
              tabs={[["Filter", 30], ["Collections", 30], ["Export", 30], ["Workflow", 36]]}
              active="Export"
            />
            <ul>
              <PresetRow>
                <CustomExportIcon />
                Custom Export
              </PresetRow>
              <PresetRow>
                <ListIcon />
                Export To DNG
              </PresetRow>
              <PresetRow $muted>
                <PlusIcon w={30} thickness={3} />
                Create new Preset
              </PresetRow>
            </ul>
            <DropHint>Drag and Drop images on a preset to export</DropHint>
            <ExportFooter>
              <StartExport disabled>Start Export</StartExport>
            </ExportFooter>
            <StatusBar $left={76}>
              <Muted>View Progress</Muted>
              <Tool $dim aria-label="Edit preset">
                <PencilIcon />
              </Tool>
              <Tool $gap={34} aria-label="Add preset">
                <PlusIcon />
              </Tool>
              <Tool $dim $gap={36} aria-label="Delete preset">
                <TrashOutlineIcon />
              </Tool>
            </StatusBar>
          </Panel>
        </Column>

        <ColumnSplitter />

        <Column>
          <Panel>
            <TabBar tabs={[["Content", 32]]} active="Content" menu />
            <ContentArea>
              <Empty>No items to display</Empty>
              <ScrollTrack />
              <ScrollTrack />
            </ContentArea>
            <StatusBar $height={59} $left={58} $right={70}>
              <Muted>No items</Muted>
              <Tool aria-label="Smaller thumbnails">
                <Svg w={24} h={24}>
                  <path d="M0 12h24" stroke="currentColor" strokeWidth="4" />
                </Svg>
              </Tool>
              <SliderWrap>
                <Svg w={287} h={26}>
                  <path d="M0 13h10" stroke="#606060" strokeWidth="3" />
                  <path d="M40 11L284 3q4 10 0 20L40 16z" fill="#595959" />
                </Svg>
                <Slider
                  type="range"
                  aria-label="Thumbnail size"
                  value={zoom}
                  onChange={(e) => setZoom(Number(e.target.value))}
                />
              </SliderWrap>
              <Tool aria-label="Larger thumbnails">
                <PlusIcon />
              </Tool>
              <ToolGroup $right={41} />
              <ToolGroup $left={7} $right={9}>
                <ViewButton aria-label="Lock thumbnail grid">
                  <Svg w={40} h={28}>
                    <path
                      d="M1 1h38v26H1zM1 14h38M14 1v26M26 1v26"
                      stroke="currentColor"
                      strokeWidth="3"
                    />
                  </Svg>
                </ViewButton>
              </ToolGroup>
              <ToolGroup $left={8} $right={10}>
                <ViewButton $active aria-label="View as thumbnails">
                  <Svg w={34} h={24}>
                    <path
                      d="M0 0h10v11H0zM12 0h10v11H12zM24 0h10v11H24zM0 13h10v11H0zM12 13h10v11H12zM24 13h10v11H24z"
                      fill="currentColor"
                    />
                  </Svg>
                </ViewButton>
                <ViewButton aria-label="View as details">
                  <Svg w={34} h={20}>
                    <path d="M0 0h20v20H0zM22 0h12v4H22zM22 8h12v4H22zM22 16h12v4H22z" fill="currentColor" />
                  </Svg>
                </ViewButton>
                <ViewButton aria-label="View as list">
                  <Svg w={34} h={20}>
                    <path d="M0 0h8v8H0zM12 2h22v4H12zM0 12h8v8H0zM12 14h22v4H12z" fill="currentColor" />
                  </Svg>
                </ViewButton>
              </ToolGroup>
              <CheckOption label="Tiles" gap={20} initial />
              <CheckOption label="Thumbnails only" />
              <CheckOption label="Use Ctrl for Labels & Ratings" initial />
            </StatusBar>
          </Panel>
        </Column>

        <ColumnSplitter />

        <Column>
          <Panel $upper>
            <TabBar tabs={[["Preview", 37], ["Publish", 32]]} active="Preview" />
          </Panel>
          <RowSplitter />
          <Panel>
            <TabBar tabs={[["Metadata", 34], ["Keywords", 32]]} active="Metadata" menu />
            <Empty $color="#686868">No files selected</Empty>
            <StatusBar>
              <Muted />
              <Tool aria-label="Cancel">
                <Svg w={24} h={24}>
                  <path d="M2 2l20 20M22 2L2 22" stroke="currentColor" strokeWidth="3" />
                </Svg>
              </Tool>
              <Tool $gap={28} aria-label="Apply">
                <Svg w={24} h={24}>
                  <path d="M1 12l7 8L22 3" stroke="currentColor" strokeWidth="4" />
                </Svg>
              </Tool>
            </StatusBar>
          </Panel>
        </Column>
      </Workspace>

      <Taskbar>
        <Tasks>
          {tasks.map((t) => (
            <Task key={t.name} aria-label={t.name} $open={t.open} $focused={t.focused}>
              {t.icon}
            </Task>
          ))}
        </Tasks>
        <Tray>
          <TrayStatus>
            <TrayChevron />
            <BatteryIcon />
            <WifiIcon />
            <MuteIcon />
          </TrayStatus>
          <PenIcon />
          <Clock>
            10:17 AM
            <br />
            2/8/2022
          </Clock>
          <Notifications aria-label="Notifications">
            <ChatIcon />
            <NotificationCount>4</NotificationCount>
          </Notifications>
        </Tray>
      </Taskbar>
    </Page>
  );
};

export default App;
